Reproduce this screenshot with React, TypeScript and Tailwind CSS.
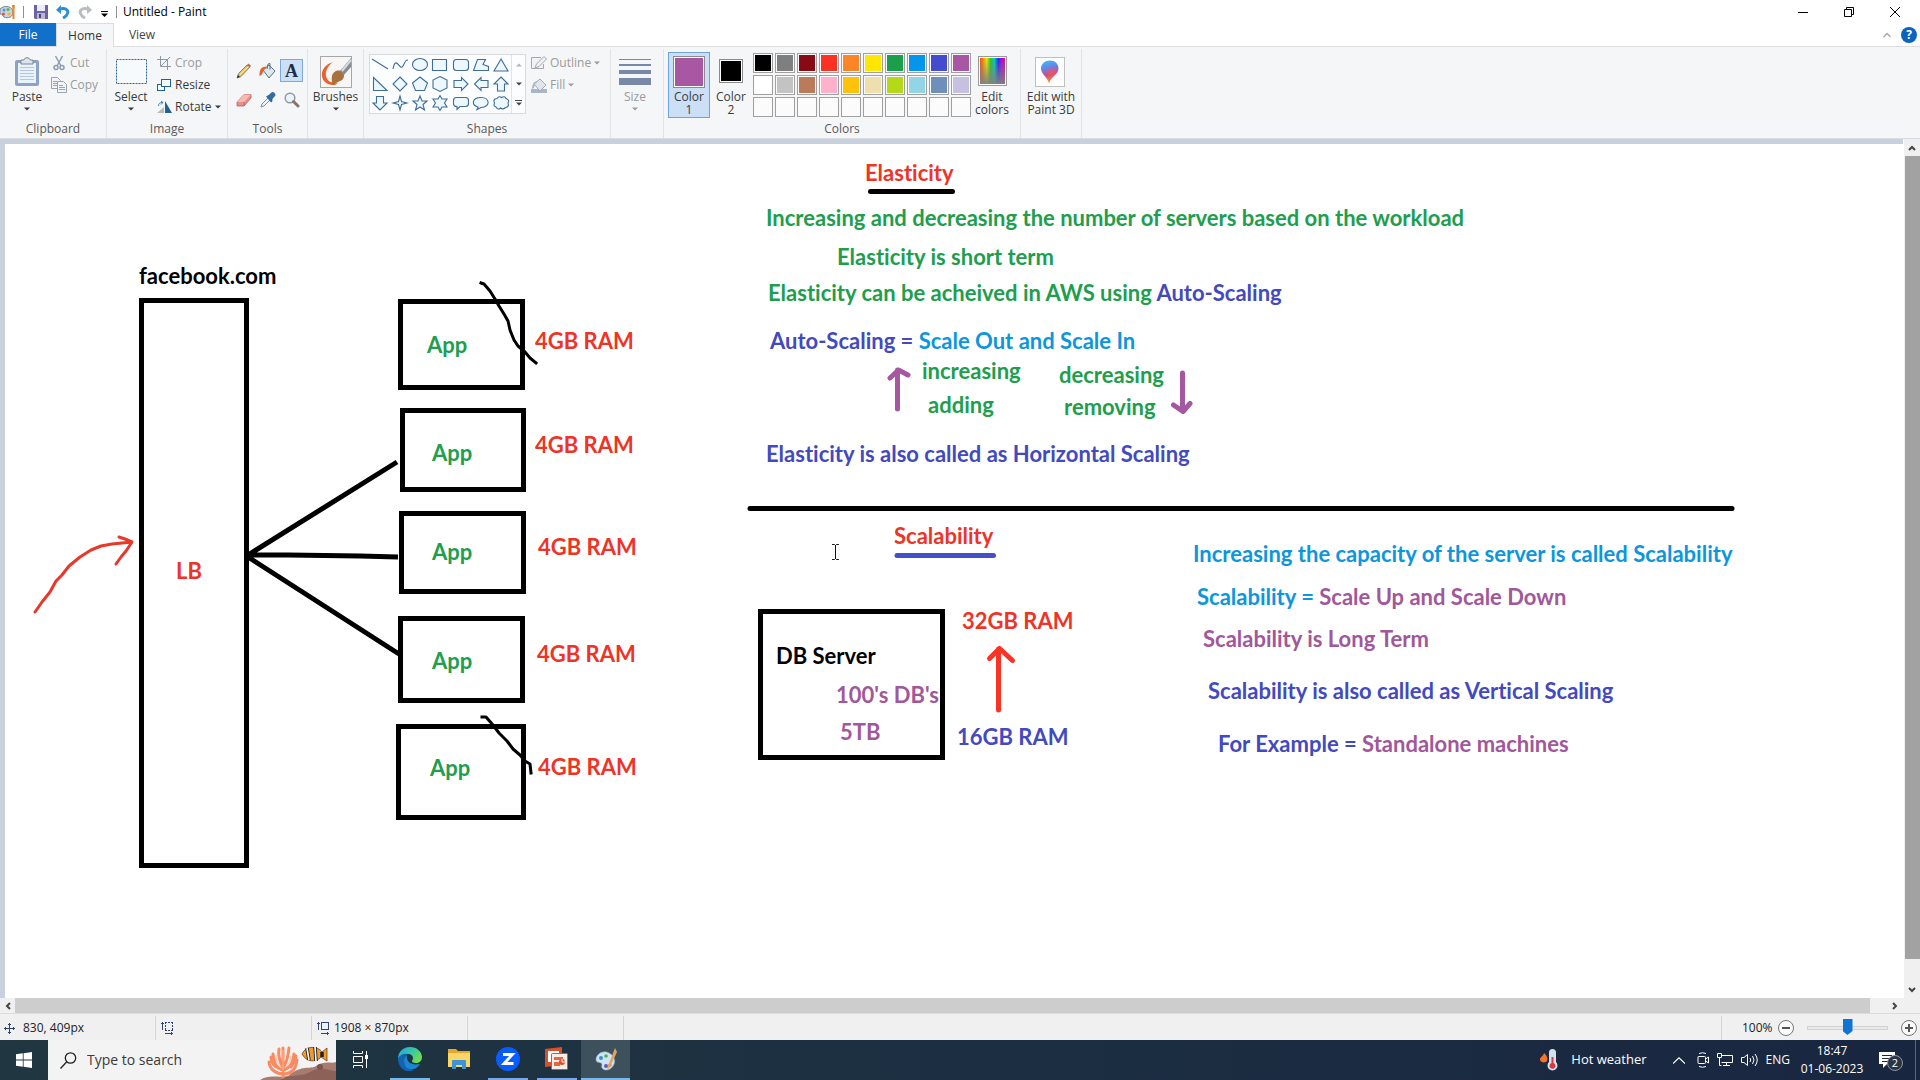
import React from "react";

const UI = "font-['Open_Sans','Noto_Sans',sans-serif]";

const GREEN = "text-[#209e4e]";
const RED = "text-[#ee3427]";
const BLUE = "text-[#4349be]";
const SKY = "text-[#0c96dd]";
const PURPLE = "text-[#a1579b]";
const BLACK = "text-black";

type Part = { t: string; c: string };
type Note = { x: number; y: number; parts: Part[] };

/* x is the left edge, y the baseline, both in canvas pixels */
const notes: Note[] = [
  { x: 134, y: 140, parts: [{ t: "facebook.com", c: BLACK }] },
  { x: 171, y: 435, parts: [{ t: "LB", c: RED }] },
  { x: 422, y: 209, parts: [{ t: "App", c: GREEN }] },
  { x: 427, y: 317, parts: [{ t: "App", c: GREEN }] },
  { x: 427, y: 416, parts: [{ t: "App", c: GREEN }] },
  { x: 427, y: 525, parts: [{ t: "App", c: GREEN }] },
  { x: 425, y: 632, parts: [{ t: "App", c: GREEN }] },
  { x: 530, y: 205, parts: [{ t: "4GB RAM", c: RED }] },
  { x: 530, y: 309, parts: [{ t: "4GB RAM", c: RED }] },
  { x: 533, y: 411, parts: [{ t: "4GB RAM", c: RED }] },
  { x: 532, y: 518, parts: [{ t: "4GB RAM", c: RED }] },
  { x: 533, y: 631, parts: [{ t: "4GB RAM", c: RED }] },
  { x: 860, y: 37, parts: [{ t: "Elasticity", c: RED }] },
  { x: 761, y: 82, parts: [{ t: "Increasing and decreasing the number of servers based on the workload", c: GREEN }] },
  { x: 832, y: 121, parts: [{ t: "Elasticity is short term", c: GREEN }] },
  { x: 763, y: 157, parts: [{ t: "Elasticity can be acheived in AWS using ", c: GREEN }, { t: "Auto-Scaling", c: BLUE }] },
  { x: 765, y: 205, parts: [{ t: "Auto-Scaling = ", c: BLUE }, { t: "Scale Out and Scale In", c: SKY }] },
  { x: 917, y: 235, parts: [{ t: "increasing", c: GREEN }] },
  { x: 923, y: 269, parts: [{ t: "adding", c: GREEN }] },
  { x: 1054, y: 239, parts: [{ t: "decreasing", c: GREEN }] },
  { x: 1059, y: 271, parts: [{ t: "removing", c: GREEN }] },
  { x: 761, y: 318, parts: [{ t: "Elasticity is also called as Horizontal Scaling", c: BLUE }] },
  { x: 889, y: 400, parts: [{ t: "Scalability", c: RED }] },
  { x: 957, y: 485, parts: [{ t: "32GB RAM", c: RED }] },
  { x: 952, y: 601, parts: [{ t: "16GB RAM", c: BLUE }] },
  { x: 771, y: 520, parts: [{ t: "DB Server", c: BLACK }] },
  { x: 831, y: 559, parts: [{ t: "100's DB's", c: PURPLE }] },
  { x: 835, y: 596, parts: [{ t: "5TB", c: PURPLE }] },
  { x: 1188, y: 418, parts: [{ t: "Increasing the capacity of the server is called Scalability", c: SKY }] },
  { x: 1192, y: 461, parts: [{ t: "Scalability = ", c: SKY }, { t: "Scale Up and Scale Down", c: PURPLE }] },
  { x: 1198, y: 503, parts: [{ t: "Scalability is Long Term", c: PURPLE }] },
  { x: 1203, y: 555, parts: [{ t: "Scalability is also called as Vertical Scaling", c: BLUE }] },
  { x: 1213, y: 608, parts: [{ t: "For Example = ", c: BLUE }, { t: "Standalone machines", c: PURPLE }] },
];

const boxes = [
  { x: 134, y: 154, w: 110, h: 570 },
  { x: 393, y: 155, w: 127, h: 91 },
  { x: 395, y: 264, w: 126, h: 84 },
  { x: 394, y: 367, w: 127, h: 83 },
  { x: 393, y: 472, w: 127, h: 87 },
  { x: 391, y: 580, w: 130, h: 96 },
  { x: 753, y: 465, w: 187, h: 151 },
];

function Canvas() {
  return (
    <main className="relative min-w-0 flex-1 overflow-hidden bg-white">
      {boxes.map((b, i) => (
        <div key={i} className="absolute border-[5px] border-black" style={{ left: b.x, top: b.y, width: b.w, height: b.h }} />
      ))}
      {notes.map((n, i) => (
        <p
          key={i}
          className="absolute text-[22px] leading-7 font-bold whitespace-pre font-['Lato',sans-serif] [font-variant-ligatures:none]"
          style={{ left: n.x, top: n.y - 22 }}
        >
          {n.parts.map((p, j) => (
            <span key={j} className={p.c}>{p.t}</span>
          ))}
        </p>
      ))}
      <svg className="absolute top-0 left-0 h-[854px] w-[1898px]" viewBox="5 144 1898 854" fill="none" strokeWidth="5" strokeLinecap="round" strokeLinejoin="round" aria-hidden="true">
        <g stroke="#000">
          <path d="M870.500 191.500H952.500" />
          <path d="M750 508.500H1732" />
          <path d="M248 555L397 462M248 555L288 555L360 556L398 557M248 557L399 654" strokeLinecap="butt" />
          <path d="M481 283L484 284L490 291L495 299L499 306L504 314L508 321L510 330L514 340L518 346L525 352L530 358L536 363" strokeWidth="3" strokeLinecap="square" />
          <path d="M482 717H486L493 725L499 733L507 741L513 749L520 755L525 761L530 764L531 773" strokeWidth="3" strokeLinecap="square" />
        </g>
        <path d="M897 555.500H993.500" stroke="#4450c8" />
        <path d="M35 612L42 602L50 592L56 581L62 575L69 566L80 557L91 550L101 546L112 544L132 542M119 537L125 539L132 542L126 551L121 557L116 564" stroke="#e8382a" strokeWidth="3" />
        <path d="M897.500 409V370M890 378L898.500 370L908 375M1182.500 373V411M1173.500 405L1183 411.500L1190 403.500" stroke="#a4589f" />
        <path d="M998.500 710V649M989.500 658.500L999.500 648.500L1012.500 660.500" stroke="#fa3424" />
        <path d="M832.500 544.500H834.500L835.500 545.500L836.500 544.500H838.500M835.500 545.500V558.500M832.500 559.500H834.500L835.500 558.500L836.500 559.500H838.500" stroke="#111" strokeWidth="1" />
      </svg>
    </main>
  );
}

function Caret({ className = "" }: { className?: string }) {
  return (
    <svg className={"h-1 w-[6px] shrink-0 " + className} viewBox="0 0 6 4" fill="currentColor" aria-hidden="true">
      <path d="M0 .5h6L3 3.500z" />
    </svg>
  );
}

function Group({ label, className, children }: { label?: string; className: string; children: React.ReactNode }) {
  return (
    <section aria-label={label} className={"flex shrink-0 flex-col border-r border-[#e2e3e4] " + className}>
      <div className="flex flex-1">{children}</div>
      {label && <h2 className="h-[18px] text-center text-xs leading-[18px] text-[#5a5a5a]">{label}</h2>}
    </section>
  );
}

function TallButton({
  icon,
  label,
  className = "",
  iconBox = "h-[41px] items-center pt-1",
  caret = true,
}: {
  icon: React.ReactNode;
  label: React.ReactNode;
  className?: string;
  iconBox?: string;
  caret?: boolean;
}) {
  return (
    <button type="button" className={"flex flex-col items-center text-xs " + className}>
      <span className={"flex shrink-0 justify-center " + iconBox}>{icon}</span>
      <span className="leading-[13px]">{label}</span>
      {caret && <Caret className="mt-1" />}
    </button>
  );
}

function RowButton({ icon, label, caret, dim }: { icon: React.ReactNode; label: string; caret?: boolean; dim?: boolean }) {
  return (
    <button type="button" className={"flex h-[22px] items-center gap-[3px] text-xs " + (dim ? "text-[#9b9b9b]" : "text-[#3b3b3b]")}>
      <span className="flex w-4 justify-center">{icon}</span>
      <span>{label}</span>
      {caret && <Caret />}
    </button>
  );
}

const PasteIcon = (
  <svg className="h-[30px] w-[26px]" viewBox="0 0 26 30" aria-hidden="true">
    <rect x="1" y="3" width="24" height="26" rx="2" fill="#8ea2c6" />
    <rect x="4" y="6" width="18" height="20" fill="#e9f1fb" />
    <path d="M6 10.500h14M6 13.500h14M6 16.500h14M6 19.500h14M6 22.500h14" stroke="#b3c6e2" />
    <path d="M7 3h3c0-3 6-3 6 0h3v4H7z" fill="#dfe4ec" stroke="#7a8798" />
  </svg>
);
const CutIcon = (
  <svg className="h-4 w-3" viewBox="0 0 12 16" fill="none" stroke="#8a9db6" aria-hidden="true">
    <path d="M2.500 1L8 11M9.500 1L4 11" strokeWidth="1.500" />
    <circle cx="3" cy="12.500" r="2" strokeWidth="1.500" /><circle cx="9" cy="12.500" r="2" strokeWidth="1.500" />
  </svg>
);
const CopyIcon = (
  <svg className="h-4 w-4" viewBox="0 0 16 16" fill="#f3f5f8" stroke="#98a5b8" aria-hidden="true">
    <path d="M.5.500h6l3 3v8h-9z" /><path d="M2 4.500h4M2 6.500h5M2 8.500h5" />
    <path d="M6.500 4.500h6l3 3v8h-9z" /><path d="M8 8.500h4M8 10.500h6M8 12.500h6" />
  </svg>
);
const SelectIcon = (
  <svg className="h-[25px] w-[31px]" viewBox="0 0 31 25" aria-hidden="true">
    <rect x=".5" y=".5" width="30" height="24" fill="#f7fafd" stroke="#2b6298" strokeDasharray="2 1" />
  </svg>
);
const CropIcon = (
  <svg className="h-[14px] w-[14px]" viewBox="0 0 14 14" fill="none" stroke="#8c99aa" aria-hidden="true">
    <path d="M0 3.500h10.500V14M3.500 0v10.500H14M13 1L4 10" />
  </svg>
);
const ResizeIcon = (
  <svg className="h-3 w-[14px]" viewBox="0 0 14 12" fill="#f5faff" stroke="#1f5f9d" aria-hidden="true">
    <rect x=".5" y="5.500" width="7" height="6" /><rect x="4.500" y=".5" width="9" height="7" />
  </svg>
);
const RotateIcon = (
  <svg className="h-3 w-[15px]" viewBox="0 0 15 12" aria-hidden="true">
    <path d="M0 12L7 6v6z" fill="#b6babd" /><path d="M8 0l7 12H8z" fill="#1e6298" />
    <path d="M1.500 5C1.500 2.500 3 1.500 5.500 1.500M4 0l2 1.500L4 3.500" fill="none" stroke="#3983c0" />
  </svg>
);
const PencilIcon = (
  <svg className="h-4 w-4" viewBox="0 0 16 16" aria-hidden="true">
    <path d="M1 15l1.500-4.500L11 2l2.500 2.500-8.500 9z" fill="#e6c069" stroke="#8f6b31" strokeWidth=".8" />
    <path d="M11 2l1.500-1.500L15 3l-1.500 1.800z" fill="#c9605a" /><path d="M1 15l1-3 2 2z" fill="#333" />
    <path d="M4 11.500L12.500 3.500" stroke="#fff1b8" />
  </svg>
);
const FillIcon = (
  <svg className="h-4 w-[17px]" viewBox="0 0 17 16" aria-hidden="true">
    <path d="M4 7l6-5 6 6-6 7z" fill="#dce7ee" stroke="#5b6e7c" /><path d="M8 6l1-5 2-.5v6" fill="none" stroke="#5b6e7c" />
    <path d="M8 4C4 3 0 5 .5 13l2-1L5 7z" fill="#e3652b" />
  </svg>
);
const EraserIcon = (
  <svg className="h-[14px] w-4" viewBox="0 0 16 14" aria-hidden="true">
    <path d="M1 9l7-7.500h7V5l-7 8H1z" fill="#ea8f8b" stroke="#bd5f60" strokeWidth=".8" />
    <path d="M1 9h7l7-7.500H8z" fill="#f8bab4" /><path d="M8 9v4" stroke="#bd5f60" strokeWidth=".8" />
  </svg>
);
const DropperIcon = (
  <svg className="h-4 w-4" viewBox="0 0 16 16" aria-hidden="true">
    <path d="M1 15l1-3 6-6 2 2-6 6z" fill="#e8f2f8" stroke="#68798a" strokeWidth=".8" />
    <path d="M6.500 4.500l2-1L12 .5c2-.5 3.500 1.500 3 3L12 7v2.500l-1 .5z" fill="#2d6fae" stroke="#254c78" strokeWidth=".6" />
  </svg>
);
const LensIcon = (
  <svg className="h-4 w-4" viewBox="0 0 16 16" aria-hidden="true">
    <circle cx="6" cy="6" r="4.800" fill="#eaf4fa" stroke="#9199a0" strokeWidth="1.500" /><path d="M9.500 9.500L14 14" stroke="#8a7568" strokeWidth="3" strokeLinecap="round" />
  </svg>
);
const BrushIcon = (
  <svg className="h-8 w-8" viewBox="0 0 32 32" aria-hidden="true">
    <rect x=".5" y=".5" width="31" height="31" fill="#f7f6f4" stroke="#a6a6a6" />
    <path d="M13 6C3 9-1 18 4 25c4 5 12 5 14 2-4 1-11-1-12-7C5 14 9 9 13 6z" fill="#e8622f" />
    <path d="M12 20c1-5 7-7 11-4 2 3 1 8-3 9-4 2-5 3-9 4 2-3 0-5 1-9z" fill="#a8713c" />
    <path d="M20 15l4 4 7-8V2z" fill="#858c94" /><path d="M22 15L31 4" stroke="#d7dce1" strokeWidth="2" />
  </svg>
);

const shapes: [string, string][] = [
  ["Line", "M1 3L17 13"],
  ["Curve", "M2 13C5 -2 9 16 12 10S15 4 17 4"],
  ["Oval", "M1.500 8.500a7.500 6 0 1 0 15 0a7.500 6 0 1 0-15 0z"],
  ["Rectangle", "M1.500 3.500h14v11h-14z"],
  ["Rounded rectangle", "M4.500 3.500h9q3 0 3 3v5q0 3-3 3h-9q-3 0-3-3v-5q0-3 3-3z"],
  ["Polygon", "M5.500 3.500h8l-2.500 5 5.500 2v4H1.500z"],
  ["Triangle", "M9 3L16 15H2z"],
  ["Right triangle", "M2.500 2.500L16 15.500H2.500z"],
  ["Diamond", "M9 2L16 9L9 16L2 9z"],
  ["Pentagon", "M9 2L16.500 8L13.500 15.500H4.500L1.500 8z"],
  ["Hexagon", "M9 1.500L16 5V13L9 16.500L2 13V5z"],
  ["Right arrow", "M2 5.500H9.500V2.500L16 9L9.500 15.500V12.500H2z"],
  ["Left arrow", "M16 5.500H9V2.500L2.500 9L9 15.500V12.500H16z"],
  ["Up arrow", "M9 2L16 9H12.500V16H5.500V9H2z"],
  ["Down arrow", "M9 16L2 9H5.500V2.500H12.500V9H16z"],
  ["Four-point star", "M9 2L10.500 7.500L16 9L10.500 10.500L9 16L7.500 10.500L2 9L7.500 7.500z"],
  ["Five-point star", "M9 2L11 7H16L12 10.500L13.500 16L9 13L4.500 16L6 10.500L2 7H7z"],
  ["Six-point star", "M9 1.500L11 5H16L13.500 9L16 13H11L9 16.500L7 13H2L4.500 9L2 5H7z"],
  ["Rounded callout", "M4.500 3.500h9q3 0 3 3v3q0 3-3 3H8l-3 3v-3q-3.500 0-3.500-3v-3q0-3 3-3z"],
  ["Oval callout", "M6 13C-1 11 0 3.500 9 3.500S19 13 9 13.500L5 15.500z"],
  ["Cloud callout", "M4 13Q1 12 2.500 9Q.5 5 5 4.500Q7 1.500 9.500 3.500Q13 1.500 14 4.500Q18 6 16 9Q17.500 13 13.500 13.500Q11 16 8.500 14Q6 16.500 4 13z"],
];

const colorRows: string[][] = [
  ["bg-black", "bg-[#7f7f7f]", "bg-[#880a15]", "bg-[#fb3124]", "bg-[#fd8528]", "bg-[#ffe600]", "bg-[#1b9f4c]", "bg-[#0496ec]", "bg-[#434ccf]", "bg-[#a857a3]"],
  ["bg-white", "bg-[#c3c3c3]", "bg-[#b97b5a]", "bg-[#ffb0ca]", "bg-[#ffc20c]", "bg-[#ede0ae]", "bg-[#b4d916]", "bg-[#93d5e6]", "bg-[#6d8fba]", "bg-[#c8c0e0]"],
  ["", "", "", "", "", "", "", "", "", ""],
];

function TitleBar() {
  return (
    <header className="flex h-[23px] shrink-0 items-center bg-white text-black">
      <svg className="h-4 w-4" viewBox="0 0 16 16" aria-hidden="true">
        <path d="M0 5C5 0 13 3 13 8c0 5-5 7-9 5-2-1-1-3-4-3z" fill="#c8d3de" stroke="#758697" />
        <circle cx="4" cy="6" r="1.500" fill="#46a0d8" /><circle cx="8" cy="5.500" r="1.500" fill="#60ae57" /><circle cx="9" cy="10" r="1.500" fill="#f2b531" /><circle cx="3.500" cy="10" r="1.500" fill="#d9534c" />
        <path d="M12 1h3l-.5 5v9h-2V6z" fill="#e58a2c" />
      </svg>
      <span className="ml-[7px] h-3 w-px bg-[#8f8f8f]" />
      <button type="button" aria-label="Save" className="ml-[10px]">
        <svg className="h-[14px] w-[14px]" viewBox="0 0 14 14" aria-hidden="true"><path d="M0 0h14v14H1l-1-1z" fill="#6e62a3" /><path d="M3 0h8v6H3z" fill="#e9edf7" /><path d="M3 8h8v6H3z" fill="#b9b8d2" /><path d="M5 9h2v4H5z" fill="#4b4676" /></svg>
      </button>
      <button type="button" aria-label="Undo" className="ml-2">
        <svg className="h-[14px] w-[14px]" viewBox="0 0 14 14" fill="none" aria-hidden="true"><path d="M3 4.500C9 2 13 5 11.500 8.500C11 10.500 9 12 7 13" stroke="#2c8fd6" strokeWidth="3" /><path d="M0 5L5 0V9z" fill="#2c8fd6" /></svg>
      </button>
      <button type="button" aria-label="Redo" className="ml-2">
        <svg className="h-[14px] w-[14px]" viewBox="0 0 14 14" fill="none" aria-hidden="true"><path d="M11 4.500C5 2 1 5 2.500 8.500C3 10.500 5 12 7 13" stroke="#b9bdc2" strokeWidth="3" /><path d="M14 5L9 0V9z" fill="#b9bdc2" /></svg>
      </button>
      <button type="button" aria-label="Customize Quick Access Toolbar" className="mt-1 ml-[9px]">
        <svg className="h-[6px] w-[7px]" viewBox="0 0 7 6" aria-hidden="true"><path d="M0 0h7v1H0zM0 2.500h7L3.500 6z" /></svg>
      </button>
      <span className="ml-2 h-3 w-px bg-[#8f8f8f]" />
      <h1 className="ml-[6px] text-xs">Untitled - Paint</h1>
      <div className="mr-[2px] ml-auto flex">
        <button type="button" aria-label="Minimize" className="flex h-5 w-[46px] items-center justify-center"><svg className="h-[10px] w-[10px]" viewBox="0 0 10 10" stroke="#000" aria-hidden="true"><path d="M0 5.500h10" /></svg></button>
        <button type="button" aria-label="Restore" className="flex h-5 w-[46px] items-center justify-center"><svg className="h-[10px] w-[10px]" viewBox="0 0 10 10" fill="none" stroke="#000" aria-hidden="true"><path d="M.5 2.500h7v7h-7zM2.500 2.500v-2h7v7h-2" /></svg></button>
        <button type="button" aria-label="Close" className="flex h-5 w-[46px] items-center justify-center"><svg className="h-[10px] w-[10px]" viewBox="0 0 10 10" stroke="#000" aria-hidden="true"><path d="M0 0l10 10M10 0L0 10" /></svg></button>
      </div>
    </header>
  );
}

function Tabs() {
  return (
    <nav className="flex h-6 shrink-0 items-stretch border-b border-[#dcdddf] bg-white text-xs">
      <button type="button" className="w-14 bg-[#1070ca] text-white">File</button>
      <button type="button" className="-mb-px w-[58px] border border-b-0 border-[#dcdddf] bg-[#f5f6f7] text-[#333]">Home</button>
      <button type="button" className="w-14 text-[#444]">View</button>
      <div className="mr-[3px] ml-auto flex items-center gap-[10px]">
        <button type="button" aria-label="Minimize the Ribbon"><svg className="h-[6px] w-2" viewBox="0 0 8 6" fill="none" stroke="#a9a9a9" strokeWidth="1.500" aria-hidden="true"><path d="M.5 5L4 1.500L7.500 5" /></svg></button>
        <button type="button" aria-label="Help" className="h-4 w-4 rounded-full bg-[#0c63bd] text-xs leading-4 font-bold text-white">?</button>
      </div>
    </nav>
  );
}

function Ribbon() {
  return (
    <div className="flex h-[92px] shrink-0 border-b border-[#dadbdc] bg-[#f5f6f7] pt-[2px] text-[#3b3b3b]">
      <Group label="Clipboard" className="w-[107px]">
        <TallButton className="ml-[9px] w-9" icon={PasteIcon} label="Paste" />
        <div className="ml-[6px] flex flex-col pt-[3px]">
          <RowButton dim icon={CutIcon} label="Cut" />
          <RowButton dim icon={CopyIcon} label="Copy" />
        </div>
      </Group>
      <Group label="Image" className="w-[121px]">
        <TallButton className="ml-[5px] w-[38px]" icon={SelectIcon} label="Select" />
        <div className="ml-[6px] flex flex-col pt-[3px]">
          <RowButton dim icon={CropIcon} label="Crop" />
          <RowButton icon={ResizeIcon} label="Resize" />
          <RowButton icon={RotateIcon} label="Rotate" caret />
        </div>
      </Group>
      <Group label="Tools" className="w-20">
        <div className="mt-[10px] ml-1 grid h-[52px] grid-cols-3 gap-x-[1px] gap-y-[6px]">
          <button type="button" aria-label="Pencil" className="flex size-[23px] items-center justify-center">{PencilIcon}</button>
          <button type="button" aria-label="Fill with color" className="flex size-[23px] items-center justify-center">{FillIcon}</button>
          <button type="button" aria-label="Text" className="flex size-[23px] items-center justify-center border border-[#7fa9dc] bg-[#cbdff6] font-['Liberation_Serif',serif] text-lg leading-none font-bold text-[#1c2c44]">A</button>
          <button type="button" aria-label="Eraser" className="flex size-[23px] items-center justify-center">{EraserIcon}</button>
          <button type="button" aria-label="Color picker" className="flex size-[23px] items-center justify-center">{DropperIcon}</button>
          <button type="button" aria-label="Magnifier" className="flex size-[23px] items-center justify-center">{LensIcon}</button>
        </div>
      </Group>
      <Group className="w-14">
        <TallButton className="w-full" icon={BrushIcon} label="Brushes" />
      </Group>
      <Group label="Shapes" className="w-[247px]">
        <div className="mt-[5px] ml-[5px] flex h-[60px] w-[157px] border border-[#d8dadc] bg-[#fbfdff]">
          <div className="grid flex-1 grid-cols-7 grid-rows-3">
            {shapes.map(([name, d]) => (
              <button key={name} type="button" aria-label={name} className="flex items-center justify-center">
                <svg className="size-[18px]" viewBox="0 0 18 18" fill="#edf8fe" stroke="#3f6c98" strokeWidth="1.100" aria-hidden="true">
                  <path d={d} fill={name === "Line" || name === "Curve" ? "none" : undefined} />
                </svg>
              </button>
            ))}
          </div>
          <div className="flex w-[14px] flex-col border-l border-[#e1e2e4] text-[#444]">
            <button type="button" aria-label="Scroll shapes up" className="flex flex-1 items-center justify-center text-[#b5b5b5]"><Caret className="rotate-180" /></button>
            <button type="button" aria-label="Scroll shapes down" className="flex flex-1 items-center justify-center"><Caret /></button>
            <button type="button" aria-label="More shapes" className="flex flex-1 flex-col items-center justify-center gap-px"><span className="h-px w-[7px] bg-[#444]" /><Caret /></button>
          </div>
        </div>
        <div className="ml-[5px] flex flex-col pt-[3px]">
          <RowButton dim caret label="Outline" icon={<svg className="h-[14px] w-4" viewBox="0 0 16 14" fill="#f0f1f3" stroke="#a2a9b1" aria-hidden="true"><path d="M10 1.500H.5v11h12V8" /><path d="M4 12l1.500-4L13 .5 15.500 3 8 10.500z" /></svg>} />
          <RowButton dim caret label="Fill" icon={<svg className="h-[15px] w-4" viewBox="0 0 16 15" aria-hidden="true"><path d="M0 11h16v4H0z" fill="#a9b5c8" /><path d="M3 6l6-5 6 6-6 6z" fill="#e2e6ec" stroke="#a0abba" /><path d="M7 3C3 3 1 6 1 11l2-1 1-4z" fill="#a9b5c8" /></svg>} />
        </div>
      </Group>
      <Group className="w-[53px]">
        <TallButton
          className="w-full pr-1 text-[#9b9b9b]"
          label="Size"
          icon={<svg className="h-7 w-8" viewBox="0 0 32 28" fill="#7889a8" aria-hidden="true"><path d="M0 1h32v1H0zM0 6h32v2H0zM0 12h32v4H0zM0 20h32v7H0z" /></svg>}
        />
      </Group>
      <Group label="Colors" className="w-[357px]">
        <TallButton
          className="mt-[3px] ml-1 h-[66px] w-[42px] border border-[#6ea3dd] bg-[#cbdff6]"
          caret={false}
          iconBox="h-[37px] items-start pt-[3px]"
          label={<>Color<br />1</>}
          icon={<span className="size-8 border border-[#8b8b8b] bg-[#a857a3] shadow-[inset_0_0_0_1px_white]" />}
        />
        <TallButton
          className="mt-1 w-[42px]"
          caret={false}
          iconBox="h-[37px] items-start pt-[6px]"
          label={<>Color<br />2</>}
          icon={<span className="size-6 border border-[#8b8b8b] bg-black shadow-[inset_0_0_0_1px_white]" />}
        />
        <div className="mt-1 ml-px grid h-16 grid-cols-10 gap-[2px]">
          {colorRows.map((row, r) =>
            row.map((c, i) => (
              <button key={r + "-" + i} type="button" aria-label={"Color " + (r * 10 + i + 1)} className="flex size-5 border border-[#a0a0a0] bg-[#fbfbfb] p-px">
                <span className={"size-full " + c} />
              </button>
            )),
          )}
        </div>
        <TallButton
          className="ml-px w-10"
          caret={false}
          label={<>Edit<br />colors</>}
          icon={<span className="mb-px h-[30px] w-[29px] border border-[#9a9a9a] bg-[linear-gradient(to_bottom,transparent,#808080),linear-gradient(to_right,#e33,#f80,#ee0,#2c2,#0cc,#22e,#b0e,#e12)] shadow-[inset_0_0_0_1px_white]" />}
        />
      </Group>
      <Group className="w-[61px]">
        <TallButton
          className="w-full"
          caret={false}
          label={<>Edit with<br />Paint 3D</>}
          icon={
            <svg className="mr-[2px] size-[30px]" viewBox="0 0 30 30" aria-hidden="true">
              <defs><linearGradient id="drop" x1="0" y1="0" x2=".2" y2="1"><stop offset="0" stopColor="#38c5ee" /><stop offset=".4" stopColor="#6a7fe8" /><stop offset=".7" stopColor="#dd4a79" /><stop offset="1" stopColor="#f7a428" /></linearGradient></defs>
              <rect x=".5" y=".5" width="29" height="29" fill="#fff" stroke="#c0c0c0" />
              <path d="M15 3.500c5 0 8.500 3.500 8.500 8 0 6-7.500 8-9.500 15-1-6-8-9-8-15 0-4.500 4-8 9-8z" fill="url(#drop)" /><path d="M13 12c5-2 8 0 8 3-2 4-6 6-7 11z" fill="#ef5a5f" opacity=".55" />
            </svg>
          }
        />
      </Group>
    </div>
  );
}

function Chevron({ d, className }: { d: string; className: string }) {
  return <svg className={className} viewBox="0 0 8 8" fill="none" stroke="#444" strokeWidth="2" aria-hidden="true"><path d={d} /></svg>;
}

function StatusBar() {
  const cell = "flex w-[156px] items-center gap-2 border-r border-[#d4d4d4] pl-1";
  return (
    <footer className="flex h-[27px] shrink-0 border-t border-[#dcdcdc] bg-[#f0f0f0] pt-[2px] text-xs text-[#222]">
      <div className={cell}>
        <svg className="size-[11px]" viewBox="0 0 11 11" stroke="#33446a" fill="none" aria-hidden="true"><path d="M5.500 0v11M0 5.500h11M4 1.500h3M4 9.500h3M1.500 4v3M9.500 4v3" /></svg>
        <span>830, 409px</span>
      </div>
      <div className={cell}>
        <svg className="ml-px h-[14px] w-[13px]" viewBox="0 0 13 14" fill="none" stroke="#33446a" aria-hidden="true"><path d="M1.500 1v8M0 2.500h3M4 12.500h8M10.500 11v3" /><path d="M4 1.500h8M4 9.500h8" strokeDasharray="2 1" /><path d="M4.500 1v9M11.500 1v9" strokeDasharray="2 1" /></svg>
      </div>
      <div className={cell}>
        <svg className="ml-px h-[14px] w-[13px]" viewBox="0 0 13 14" fill="none" stroke="#33446a" aria-hidden="true"><path d="M1.500 1v8M0 2.500h3M4 12.500h8M10.500 11v3" /><rect x="4.500" y="1.500" width="7" height="7" fill="#e8f2fc" /></svg>
        <span className="-ml-1">1908 × 870px</span>
      </div>
      <div className="w-[156px] border-r border-[#d4d4d4]" />
      <div className="ml-auto flex w-[199px] items-center border-l border-[#d4d4d4] pl-5">
        <span className="w-9">100%</span>
        <button type="button" aria-label="Zoom out" className="flex size-4 shrink-0 items-center justify-center rounded-full border border-[#777] bg-[#fafafa]"><span className="h-[2px] w-2 bg-[#555]" /></button>
        <input
          type="range"
          aria-label="Zoom"
          defaultValue={50}
          className="mx-[13px] h-4 w-[81px] shrink-0 appearance-none bg-transparent [&::-webkit-slider-runnable-track]:h-1 [&::-webkit-slider-runnable-track]:border [&::-webkit-slider-runnable-track]:border-[#d2d2d2] [&::-webkit-slider-runnable-track]:bg-[#e9e9e9] [&::-webkit-slider-thumb]:-mt-2 [&::-webkit-slider-thumb]:h-4 [&::-webkit-slider-thumb]:w-[10px] [&::-webkit-slider-thumb]:appearance-none [&::-webkit-slider-thumb]:bg-[#0f74d4] [&::-webkit-slider-thumb]:[clip-path:polygon(0_0,100%_0,100%_75%,50%_100%,0_75%)]"
        />
        <button type="button" aria-label="Zoom in" className="flex size-4 shrink-0 items-center justify-center rounded-full border border-[#777] bg-[#fafafa]"><svg className="size-2" viewBox="0 0 8 8" stroke="#555" strokeWidth="2" aria-hidden="true"><path d="M4 0v8M0 4h8" /></svg></button>
      </div>
    </footer>
  );
}

function Task({ label, className, bar, children }: { label: string; className?: string; bar?: string; children: React.ReactNode }) {
  return (
    <button type="button" aria-label={label} className={"flex h-10 w-[49px] flex-col items-center " + (className ?? "")}>
      <span className="flex flex-1 items-center">{children}</span>
      <span className={"h-[2px] " + (bar ?? "w-0")} />
    </button>
  );
}

function Taskbar() {
  return (
    <div className="flex h-10 shrink-0 items-stretch bg-[linear-gradient(to_right,#203640,#1c2f42_50%,#192640)] text-white">
      <button type="button" aria-label="Start" className="flex w-12 items-center justify-center">
        <svg className="size-4" viewBox="0 0 16 16" fill="#fff" aria-hidden="true"><path d="M0 2.200L6.800 1.300V7.600H0zM7.600 1.200L16 0V7.600H7.600zM0 8.400H6.800V14.700L0 13.800zM7.600 8.400H16V16L7.600 14.800z" /></svg>
      </button>
      <label className="flex w-72 items-center overflow-hidden bg-[#f3f3f3] text-[#333]">
        <svg className="ml-3 size-[17px] shrink-0" viewBox="0 0 17 17" fill="none" stroke="#222" strokeWidth="1.300" aria-hidden="true"><circle cx="10.500" cy="6" r="5.200" /><path d="M6.800 9.800L.5 16.500" /></svg>
        <input type="text" aria-label="Search" placeholder="Type to search" className="ml-[10px] w-0 min-w-0 flex-1 bg-transparent text-sm outline-none placeholder:text-[#3a3a3a]" />
        <svg className="h-10 w-[76px] shrink-0 self-end" viewBox="0 0 76 40" aria-hidden="true">
          <path d="M0 40C8 34 18 38 28 36C42 24 50 30 56 26C64 20 72 24 76 22V40z" fill="#a87b70" />
          <path d="M20 40C30 33 40 38 50 32S68 30 76 31V40z" fill="#8c6258" />
          <g fill="none" stroke="#f98a62" strokeWidth="3" strokeLinecap="round">
            <path d="M23 37V8M23 30C15 28 14 22 13 14M23 34C12 33 9 26 9 22M23 28C19 20 18 14 19 9M23 30C31 28 33 22 34 14M24 34C34 33 36 27 37 20M24 26C28 20 28 14 29 8M16 27C12 24 11 20 11 17M31 27C34 23 35 20 36 16" />
          </g>
          <g stroke="#ffb894" strokeWidth="1" fill="none"><path d="M23 30V10M22 28C18 24 16 20 16 15M25 28C29 24 31 20 31 16" /></g>
          <path d="M42 14C46 5 58 6 62 12L67 8V21L61 17C56 23 46 22 42 14z" fill="#f39a2b" stroke="#55331c" strokeWidth=".7" />
          <path d="M47 8L49 20M55 7L56 21M62 12V17" stroke="#27211f" strokeWidth="3.500" /><path d="M47 8L49 20M55 7L56 21" stroke="#fff" strokeWidth="1.600" />
          <circle cx="60" cy="27" r="3" fill="#7e554e" />
        </svg>
      </label>
      <Task label="Task View">
        <svg className="h-[17px] w-[17px]" viewBox="0 0 17 17" fill="none" stroke="#fff" aria-hidden="true"><path d="M1.500 0v2.500h9V0M1.500 17v-2.500h9V17M1.500 5.500h9v6h-9zM14.500 0v17" /><path d="M13 4h3v4h-3z" fill="#fff" stroke="none" /></svg>
      </Task>
      <Task label="Microsoft Edge" bar="w-10 bg-[#76b9ed]">
        <svg className="size-6" viewBox="0 0 24 24" aria-hidden="true">
          <defs><linearGradient id="edge" x1="0" y1="0" x2="1" y2=".5"><stop offset="0" stopColor="#21a7e4" /><stop offset=".6" stopColor="#38c8a4" /><stop offset="1" stopColor="#6ddc53" /></linearGradient></defs>
          <path d="M0 12C0 4 6 0 12 0c7 0 12 5 12 10 0 4-3 6-6 6-3 0-4-1-4-2s1-1 1-3c0-2-2-4-5-4C5 7 1 10 0 12z" fill="url(#edge)" />
          <path d="M0 12c1-4 6-6 10-5-3 1-4 4-4 7 0 6 5 9 10 9-9 4-16-3-16-11z" fill="#1263b3" /><path d="M6 14c0-3 1-5 3-6-1 6 3 11 13 9-6 9-16 6-16-3z" fill="#1a87d4" />
        </svg>
      </Task>
      <Task label="File Explorer">
        <svg className="h-5 w-[22px]" viewBox="0 0 22 20" aria-hidden="true"><path d="M0 0h8l2 2h12v16H0z" fill="#e5a72c" /><path d="M0 4h22v14H0z" fill="#fbd667" /><path d="M4 20v-8q0-1 1-1h12q1 0 1 1v8h-4v-4H8v4z" fill="#3c93d9" /></svg>
      </Task>
      <Task label="Zoom" bar="w-10 bg-[#76a9ed]">
        <svg className="size-6" viewBox="0 0 24 24" aria-hidden="true"><circle cx="12" cy="12" r="12" fill="#0b5cff" /><path d="M7 7.500h9.500L8 16.500h9.500" fill="none" stroke="#fff" strokeWidth="2.800" /></svg>
      </Task>
      <Task label="PowerPoint" bar="w-10 bg-[#76a9ed]">
        <svg className="h-6 w-[23px]" viewBox="0 0 23 24" aria-hidden="true"><path d="M0 2L17 0V18L0 20z" fill="#d8512c" /><path d="M3 4h11v3H6v8H3z" fill="#fff" /><rect x="6.500" y="6.500" width="16" height="16" rx="1" fill="#f8ece6" stroke="#d8512c" /><path d="M9 10h9v3H9zM9 15h6v4H9z" fill="#e2693f" /><circle cx="17" cy="15" r="3" fill="#d8512c" /><path d="M17 12v3h3" stroke="#fff" fill="none" /></svg>
      </Task>
      <Task label="Paint" className="bg-[#3d515c]" bar="w-full bg-[#76b9ed]">
        <svg className="size-6" viewBox="0 0 24 24" aria-hidden="true"><path d="M2 12C3 6 10 3 15 6c6 3 7 9 4 13-3 5-9 5-11 2-1-2 1-4-1-5s-5 0-5-4z" fill="#cfe4f2" stroke="#8fb0c6" strokeWidth=".6" /><circle cx="7" cy="11" r="2" fill="#3b8ed0" /><circle cx="12" cy="9" r="1.800" fill="#50ae53" /><circle cx="12" cy="19" r="2" fill="#6b56b3" /><circle cx="16" cy="18" r="1.600" fill="#e2473c" /><path d="M21 1l2 4-7 15-3 3 1-4z" fill="#e3a45a" /></svg>
      </Task>
      <div className="ml-auto flex items-center">
        <svg className="h-[22px] w-[19px]" viewBox="0 0 19 22" aria-hidden="true"><path d="M4 4c3 3 4 5 3 8-1 2-6 2-7-1-.500-3 3-3 4-7z" fill="#f4742c" /><path d="M9 3.500a3.500 3.500 0 0 1 7 0V13a5 5 0 1 1-7 0z" fill="#d5e0ee" /><path d="M11.500 8h2v6a3 3 0 1 1-2 0z" fill="#d33b3f" /></svg>
        <span className="ml-3 text-[13px]">Hot weather</span>
        <div className="ml-[26px] flex items-center gap-2">
          <svg className="h-[7px] w-3" viewBox="0 0 12 7" fill="none" stroke="#fff" strokeWidth="1.200" aria-hidden="true"><path d="M0 6.500L6 .8L12 6.500" /></svg>
          <svg className="ml-1 h-4 w-3" viewBox="0 0 12 16" fill="none" stroke="#fff" aria-hidden="true"><path d="M1 5q0-.5.500-.5h6q1 0 1 1v5q0 1-1 1h-6q-.5 0-.5-1zM8.500 7l3-2v6l-3-2M2 1.500Q5.500 0 9 1.500M2 14.500Q5.500 16 9 14.500" /></svg>
          <svg className="h-[14px] w-4" viewBox="0 0 16 14" fill="none" stroke="#fff" aria-hidden="true"><path d="M4.500 2.500h11v7h-11M9.500 9.500v3M6 12.500h7M.5.500h4v4h-4zM2.500 4.500v8h2" /></svg>
          <svg className="h-[14px] w-[17px]" viewBox="0 0 17 14" fill="none" stroke="#fff" aria-hidden="true"><path d="M.5 4.500H3l3.500-3v11L3 9.500H.5zM9 5q1.500 2 0 4M11.500 3q3 4 0 8M14 1q4.500 6 0 12" /></svg>
          <span className="text-xs">ENG</span>
        </div>
        <div className="ml-[10px] flex w-16 flex-col items-center text-xs leading-[18px] whitespace-nowrap"><span>18:47</span><span>01-06-2023</span></div>
        <button type="button" aria-label="Notifications, 2 new" className="relative ml-[15px] h-6 w-6">
          <svg className="h-4 w-4" viewBox="0 0 16 16" aria-hidden="true"><path d="M0 0h16v12H8l-4 4v-4H0z" fill="#fff" /><path d="M3 3.500h10M3 6.500h10M3 9.500h6" stroke="#1a2740" /></svg>
          <span className="absolute top-[7px] left-2 size-4 rounded-full border border-[#8c96a6] bg-[#2b3443] text-center text-[11px] leading-[14px]">2</span>
        </button>
        <span className="mr-1 ml-3 h-10 w-px bg-[#5b6779]" />
      </div>
    </div>
  );
}

export default function App() {
  return (
    <div className={"flex h-screen w-full flex-col overflow-hidden bg-white " + UI}>
      <TitleBar />
      <Tabs />
      <Ribbon />
      <div className="flex min-h-0 flex-1 bg-[#c8d1de]">
        <div className="flex min-w-0 flex-1 pt-[5px] pl-[5px]"><Canvas /></div>
        <div className="flex w-[17px] flex-col items-center border-l border-white bg-[#f0f0f0]">
          <button type="button" aria-label="Scroll up" className="flex h-[17px] w-full items-center justify-center"><Chevron className="size-2" d="M1 6L4 3L7 6" /></button>
          <div className="w-[15px] flex-1 bg-[#a2a2a2]" />
          <button type="button" aria-label="Scroll down" className="mt-[22px] flex h-[17px] w-full items-center justify-center"><Chevron className="size-2" d="M1 2L4 5L7 2" /></button>
        </div>
      </div>
      <div className="flex h-[15px] shrink-0 bg-[#f0f0f0]">
        <button type="button" aria-label="Scroll left" className="flex w-[15px] items-center justify-center"><Chevron className="size-2" d="M6 1L3 4L6 7" /></button>
        <div className="flex-1 bg-[#cdcdcd]" />
        <button type="button" aria-label="Scroll right" className="mr-[17px] ml-4 flex w-[17px] items-center justify-center"><Chevron className="size-2" d="M2 1L5 4L2 7" /></button>
      </div>
      <StatusBar />
      <Taskbar />
    </div>
  );
}
